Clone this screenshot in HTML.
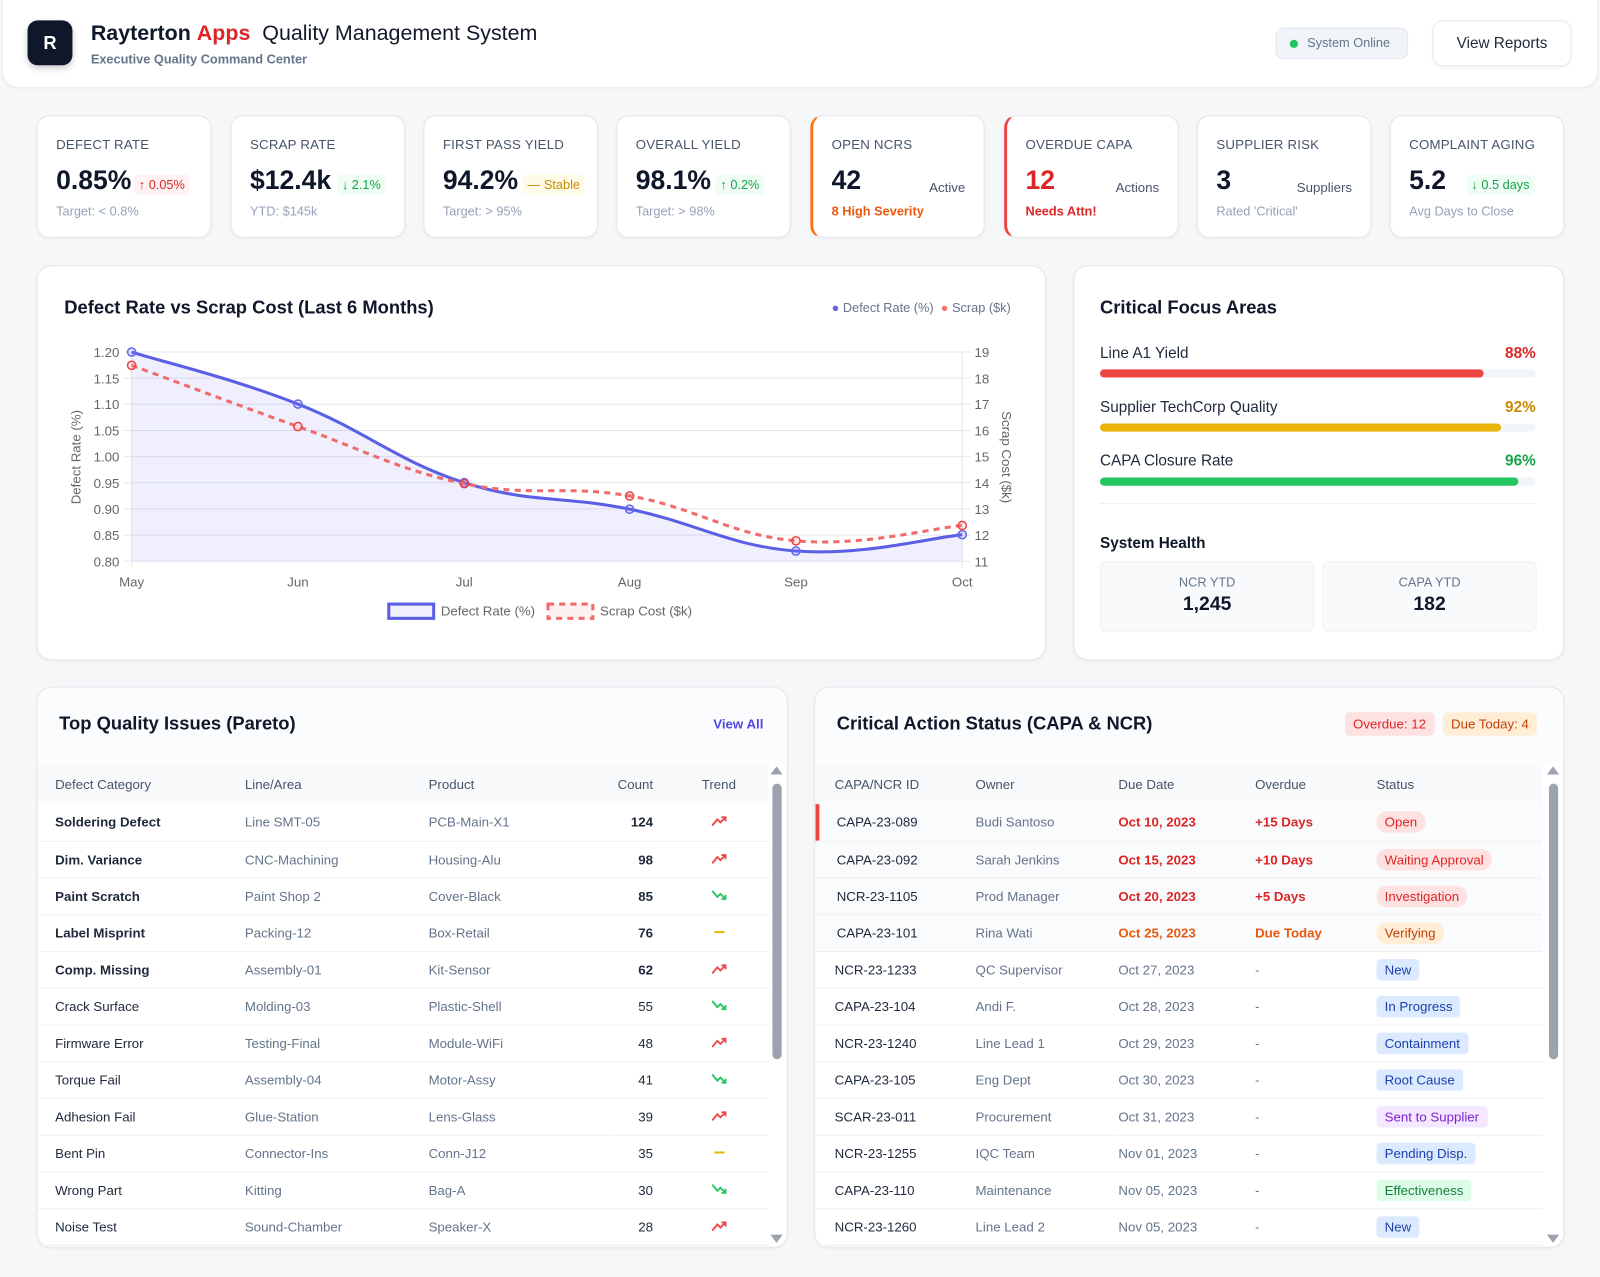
<!DOCTYPE html>
<html><head><meta charset="utf-8">
<style>
*{box-sizing:border-box;margin:0;padding:0}
html,body{width:1600px;height:1276px;overflow:hidden;background:#f6f7f9}
body{font-family:"Liberation Sans",sans-serif;color:#0f172a}
#w{position:absolute;left:0;top:0;width:1568px;height:1251px;transform:scale(1.0204);transform-origin:0 0}
.abs{position:absolute}
.card{position:absolute;background:#fff;border:1px solid #e5e7eb;border-radius:14px;box-shadow:0 1px 3px rgba(0,0,0,.05)}
.kpi{position:absolute;top:113px;width:171px;height:120px;background:#fff;border:1px solid #e5e7eb;border-radius:12px;box-shadow:0 1px 3px rgba(0,0,0,.05)}
.kpi .l{position:absolute;left:18px;top:20px;font-size:13px;color:#475569;letter-spacing:.2px}
.kpi .v{position:absolute;left:18px;top:47px;font-size:26px;font-weight:bold;color:#0f172a}
.kpi .s{position:absolute;left:18px;top:86px;font-size:12.5px;color:#94a3b8}
.kpi .b{position:absolute;top:57px;font-size:12.5px;padding:3px 5px;border-radius:5px}
.kpi .r{position:absolute;right:18px;top:62px;font-size:13px;color:#475569}
.red{color:#dc2626}.grn{color:#16a34a}
table{border-collapse:collapse;table-layout:fixed;position:absolute;font-size:13px}
th{height:40px;background:#f8fafc;color:#475569;font-weight:normal;text-align:left;font-size:13px}
td{height:36px;border-bottom:1px solid #eef0f3;color:#64748b}
.pill{display:inline-block;padding:3px 8px;border-radius:10px;font-size:13px}
.sq{border-radius:4px}
h2{position:absolute;font-size:18px;font-weight:bold;color:#0f172a}
</style></head><body><div id="w">

<div class="abs" style="left:2px;top:0;width:1564px;height:86px;background:#fff;border:1px solid #eceef1;border-top:none;border-radius:0 0 16px 16px;box-shadow:0 1px 4px rgba(0,0,0,.04)"></div>
<div class="abs" style="left:27px;top:20px;width:44px;height:44px;background:#0f172a;border-radius:10px;color:#fff;font-weight:bold;font-size:18px;text-align:center;line-height:44px;box-shadow:0 3px 6px rgba(0,0,0,.2)">R</div>
<div class="abs" style="left:89px;top:21px;font-size:21px;white-space:nowrap"><b>Rayterton</b> <b style="color:#dc2626">Apps</b>&nbsp;&nbsp;<span style="color:#111827">Quality Management System</span></div>
<div class="abs" style="left:89px;top:51px;font-size:12.5px;color:#64748b;font-weight:bold">Executive Quality Command Center</div>
<div class="abs" style="left:1250px;top:27px;width:130px;height:31px;background:#f1f5f9;border:1px solid #e2e8f0;border-radius:8px;font-size:12.5px;color:#64748b;line-height:29px;padding-left:30px"><span class="abs" style="left:13px;top:11px;width:8px;height:8px;border-radius:50%;background:#22c55e"></span>System Online</div>
<div class="abs" style="left:1404px;top:20px;width:136px;height:45px;background:#fff;border:1px solid #e2e8f0;border-radius:10px;font-size:15px;color:#1e293b;text-align:center;line-height:43px;box-shadow:0 1px 3px rgba(0,0,0,.05)">View Reports</div>

<div class="kpi" style="left:36px"><div class="l">DEFECT RATE</div><div class="v">0.85%</div><div class="b" style="left:94px;background:#fef2f2;color:#dc2626">↑ 0.05%</div><div class="s">Target: &lt; 0.8%</div></div>
<div class="kpi" style="left:226px"><div class="l">SCRAP RATE</div><div class="v">$12.4k</div><div class="b" style="left:103px;background:#f0fdf4;color:#16a34a">↓ 2.1%</div><div class="s">YTD: $145k</div></div>
<div class="kpi" style="left:415px"><div class="l">FIRST PASS YIELD</div><div class="v">94.2%</div><div class="b" style="left:96px;background:#fefce8;color:#ca8a04">— Stable</div><div class="s">Target: &gt; 95%</div></div>
<div class="kpi" style="left:604px"><div class="l">OVERALL YIELD</div><div class="v">98.1%</div><div class="b" style="left:96px;background:#f0fdf4;color:#16a34a">↑ 0.2%</div><div class="s">Target: &gt; 98%</div></div>
<div class="kpi" style="left:794px;border-left:3px solid #f97316"><div class="l">OPEN NCRS</div><div class="v">42</div><div class="r">Active</div><div class="s" style="color:#ea580c;font-weight:bold">8 High Severity</div></div>
<div class="kpi" style="left:984px;border-left:3px solid #ef4444"><div class="l">OVERDUE CAPA</div><div class="v" style="color:#dc2626">12</div><div class="r">Actions</div><div class="s" style="color:#dc2626;font-weight:bold">Needs Attn!</div></div>
<div class="kpi" style="left:1173px"><div class="l">SUPPLIER RISK</div><div class="v">3</div><div class="r">Suppliers</div><div class="s">Rated 'Critical'</div></div>
<div class="kpi" style="left:1362px"><div class="l">COMPLAINT AGING</div><div class="v">5.2</div><div class="b" style="left:74px;background:#f0fdf4;color:#16a34a">↓ 0.5 days</div><div class="s">Avg Days to Close</div></div>

<div class="card" style="left:36px;top:260px;width:989px;height:387px"></div>
<h2 style="left:63px;top:291px">Defect Rate vs Scrap Cost (Last 6 Months)</h2>
<div class="abs" style="left:815px;top:295px;font-size:12.5px;color:#64748b;white-space:nowrap"><span style="color:#6366f1">●</span> Defect Rate (%) &nbsp;<span style="color:#f87171">●</span> Scrap ($k)</div>
<svg class="abs" style="left:0;top:0" width="1030" height="650" font-family="Liberation Sans,sans-serif" font-size="13" fill="#666">
<g stroke="#e5e7eb" stroke-width="1">
<line x1="121" y1="345" x2="951" y2="345"/><line x1="121" y1="370.6" x2="951" y2="370.6"/><line x1="121" y1="396.2" x2="951" y2="396.2"/><line x1="121" y1="421.9" x2="951" y2="421.9"/><line x1="121" y1="447.5" x2="951" y2="447.5"/><line x1="121" y1="473.1" x2="951" y2="473.1"/><line x1="121" y1="498.7" x2="951" y2="498.7"/><line x1="121" y1="524.4" x2="951" y2="524.4"/><line x1="121" y1="550" x2="951" y2="550"/>
<line x1="129" y1="345" x2="129" y2="556"/><line x1="943" y1="345" x2="943" y2="556"/>
</g>
<g text-anchor="end"><text x="117" y="350">1.20</text><text x="117" y="375.6">1.15</text><text x="117" y="401">1.10</text><text x="117" y="427">1.05</text><text x="117" y="452.5">1.00</text><text x="117" y="478">0.95</text><text x="117" y="503.7">0.90</text><text x="117" y="529.4">0.85</text><text x="117" y="555">0.80</text></g>
<g><text x="955" y="350">19</text><text x="955" y="375.6">18</text><text x="955" y="401">17</text><text x="955" y="427">16</text><text x="955" y="452.5">15</text><text x="955" y="478">14</text><text x="955" y="503.7">13</text><text x="955" y="529.4">12</text><text x="955" y="555">11</text></g>
<g text-anchor="middle"><text x="129" y="575">May</text><text x="292" y="575">Jun</text><text x="455" y="575">Jul</text><text x="617" y="575">Aug</text><text x="780" y="575">Sep</text><text x="943" y="575">Oct</text></g>
<text transform="translate(79,448) rotate(-90)" text-anchor="middle">Defect Rate (%)</text>
<text transform="translate(982,448) rotate(90)" text-anchor="middle">Scrap Cost ($k)</text>
<path d="M129,345 C161.6,355.2 226.8,370.4 292,396 C357.2,421.6 390,452.4 455,473 C520,493.6 552,485.6 617,499 C682,512.4 714.8,535 780,540 C845.2,545 910.4,527.2 943,524 L943,550 L129,550 Z" fill="rgba(99,102,241,0.1)"/>
<path d="M129,345 C161.6,355.2 226.8,370.4 292,396 C357.2,421.6 390,452.4 455,473 C520,493.6 552,485.6 617,499 C682,512.4 714.8,535 780,540 C845.2,545 910.4,527.2 943,524" fill="none" stroke="#5b5fe6" stroke-width="3"/>
<path d="M129,358 C161.6,370 226.8,394.8 292,418 C357.2,441.2 390,460.4 455,474 C520,487.6 552,474.8 617,486 C682,497.2 714.8,524.2 780,530 C845.2,535.8 910.4,518 943,515" fill="none" stroke="#f06b6b" stroke-width="3" stroke-dasharray="6,5"/>
<g fill="rgba(99,102,241,0.15)" stroke="#6366f1" stroke-width="1.5"><circle cx="129" cy="345" r="4"/><circle cx="292" cy="396" r="4"/><circle cx="455" cy="473" r="4"/><circle cx="617" cy="499" r="4"/><circle cx="780" cy="540" r="4"/><circle cx="943" cy="524" r="4"/></g>
<g fill="rgba(248,113,113,0.15)" stroke="#ef4444" stroke-width="1.5"><circle cx="129" cy="358" r="4"/><circle cx="292" cy="418" r="4"/><circle cx="455" cy="474" r="4"/><circle cx="617" cy="486" r="4"/><circle cx="780" cy="530" r="4"/><circle cx="943" cy="515" r="4"/></g>
<rect x="381" y="592" width="44" height="14" fill="rgba(99,102,241,0.1)" stroke="#5b5fe6" stroke-width="3"/>
<text x="432" y="603">Defect Rate (%)</text>
<rect x="537" y="592" width="44" height="14" fill="rgba(248,113,113,0.1)" stroke="#f06b6b" stroke-width="3" stroke-dasharray="6,5"/>
<text x="588" y="603">Scrap Cost ($k)</text>
</svg>

<div class="card" style="left:1052px;top:260px;width:481px;height:387px"></div>
<h2 style="left:1078px;top:291px">Critical Focus Areas</h2>
<div class="abs" style="left:1078px;top:338px;width:427px;font-size:15px;color:#1e293b">Line A1 Yield<b class="abs red" style="right:0;top:0">88%</b></div>
<div class="abs" style="left:1078px;top:362px;width:427px;height:8px;background:#f1f5f9;border-radius:4px"><div style="width:88%;height:8px;background:#ef4444;border-radius:4px"></div></div>
<div class="abs" style="left:1078px;top:391px;width:427px;font-size:15px;color:#1e293b">Supplier TechCorp Quality<b class="abs" style="right:0;top:0;color:#ca8a04">92%</b></div>
<div class="abs" style="left:1078px;top:415px;width:427px;height:8px;background:#f1f5f9;border-radius:4px"><div style="width:92%;height:8px;background:#eab308;border-radius:4px"></div></div>
<div class="abs" style="left:1078px;top:443px;width:427px;font-size:15px;color:#1e293b">CAPA Closure Rate<b class="abs grn" style="right:0;top:0">96%</b></div>
<div class="abs" style="left:1078px;top:468px;width:427px;height:8px;background:#f1f5f9;border-radius:4px"><div style="width:96%;height:8px;background:#22c55e;border-radius:4px"></div></div>
<div class="abs" style="left:1078px;top:493px;width:427px;height:1px;background:#eef0f3"></div>
<div class="abs" style="left:1078px;top:524px;font-size:15px;font-weight:bold">System Health</div>
<div class="abs" style="left:1078px;top:550px;width:210px;height:69px;background:#f8fafc;border:1px solid #eef0f3;border-radius:6px;text-align:center"><div style="font-size:12.5px;color:#64748b;margin-top:13px">NCR YTD</div><div style="font-size:19px;font-weight:bold;margin-top:4px">1,245</div></div>
<div class="abs" style="left:1296px;top:550px;width:210px;height:69px;background:#f8fafc;border:1px solid #eef0f3;border-radius:6px;text-align:center"><div style="font-size:12.5px;color:#64748b;margin-top:13px">CAPA YTD</div><div style="font-size:19px;font-weight:bold;margin-top:4px">182</div></div>

<div class="card" style="left:36px;top:673px;width:736px;height:550px;overflow:hidden;background:#fff"></div>
<div class="abs" style="left:37px;top:674px;width:734px;height:74px;background:#fbfcfd;border-radius:14px 14px 0 0"></div>
<h2 style="left:58px;top:699px">Top Quality Issues (Pareto)</h2>
<div class="abs" style="left:699px;top:702px;font-size:13px;color:#4f46e5;font-weight:bold">View All</div>
<table style="left:37px;top:748px;width:716px">
<colgroup><col style="width:203px"><col style="width:180px"><col style="width:180px"><col style="width:40px"><col style="width:113px"></colgroup>
<tr><th style="padding-left:17px">Defect Category</th><th>Line/Area</th><th>Product</th><th style="text-align:right">Count</th><th style="text-align:center;padding-left:16px">Trend</th></tr>
<tbody id="pb"></tbody>
</table>
<div class="abs" style="left:757px;top:768px;width:9px;height:270px;background:#9ca3af;border-radius:5px"></div>
<div class="abs" style="left:755px;top:751px;width:0;height:0;border-left:6px solid transparent;border-right:6px solid transparent;border-bottom:8px solid #9ca3af"></div>
<div class="abs" style="left:755px;top:1210px;width:0;height:0;border-left:6px solid transparent;border-right:6px solid transparent;border-top:8px solid #9ca3af"></div>

<div class="card" style="left:798px;top:673px;width:735px;height:550px"></div>
<div class="abs" style="left:799px;top:674px;width:733px;height:74px;background:#fbfcfd;border-radius:14px 14px 0 0"></div>
<h2 style="left:820px;top:699px">Critical Action Status (CAPA &amp; NCR)</h2>
<div class="abs" style="left:1318px;top:698px;font-size:13px;background:#fee2e2;color:#dc2626;padding:4px 8px;border-radius:5px">Overdue: 12</div>
<div class="abs" style="left:1414px;top:698px;font-size:13px;background:#ffedd5;color:#c2410c;padding:4px 8px;border-radius:5px">Due Today: 4</div>
<table style="left:799px;top:748px;width:713px">
<colgroup><col style="width:157px"><col style="width:140px"><col style="width:134px"><col style="width:119px"><col style="width:163px"></colgroup>
<tr><th style="padding-left:19px">CAPA/NCR ID</th><th>Owner</th><th>Due Date</th><th>Overdue</th><th>Status</th></tr>
<tbody id="cb"></tbody>
</table>
<div class="abs" style="left:1518px;top:768px;width:9px;height:270px;background:#9ca3af;border-radius:5px"></div>
<div class="abs" style="left:1516px;top:751px;width:0;height:0;border-left:6px solid transparent;border-right:6px solid transparent;border-bottom:8px solid #9ca3af"></div>
<div class="abs" style="left:1516px;top:1210px;width:0;height:0;border-left:6px solid transparent;border-right:6px solid transparent;border-top:8px solid #9ca3af"></div>
</div>
<script>
var up='<svg width="16" height="11" viewBox="0 0 16 11"><path d="M1,10 L6,4 L9,7 L14,2 M10,2 L14,2 L14,6" fill="none" stroke="#ef4444" stroke-width="1.8"/></svg>';
var dn='<svg width="16" height="11" viewBox="0 0 16 11"><path d="M1,1 L6,7 L9,4 L14,9 M10,9 L14,9 L14,5" fill="none" stroke="#22c55e" stroke-width="1.8"/></svg>';
var fl='<svg width="16" height="11" viewBox="0 0 16 11"><path d="M3,5.5 L13,5.5" stroke="#eab308" stroke-width="2"/></svg>';
var P=[["Soldering Defect","Line SMT-05","PCB-Main-X1","124",up],["Dim. Variance","CNC-Machining","Housing-Alu","98",up],["Paint Scratch","Paint Shop 2","Cover-Black","85",dn],["Label Misprint","Packing-12","Box-Retail","76",fl],["Comp. Missing","Assembly-01","Kit-Sensor","62",up],["Crack Surface","Molding-03","Plastic-Shell","55",dn],["Firmware Error","Testing-Final","Module-WiFi","48",up],["Torque Fail","Assembly-04","Motor-Assy","41",dn],["Adhesion Fail","Glue-Station","Lens-Glass","39",up],["Bent Pin","Connector-Ins","Conn-J12","35",fl],["Wrong Part","Kitting","Bag-A","30",dn],["Noise Test","Sound-Chamber","Speaker-X","28",up]];
var h='';P.forEach(function(r,i){var b=i<5;h+='<tr><td style="padding-left:17px;color:#1e293b;'+(b?'font-weight:bold':'')+'">'+r[0]+'</td><td>'+r[1]+'</td><td>'+r[2]+'</td><td style="text-align:right;color:#1e293b;'+(b?'font-weight:bold':'')+'">'+r[3]+'</td><td style="text-align:center;padding-left:16px">'+r[4]+'</td></tr>';});
document.getElementById('pb').innerHTML=h;
var C=[["CAPA-23-089","Budi Santoso","Oct 10, 2023","+15 Days","Open","#fee2e2","#dc2626",1],["CAPA-23-092","Sarah Jenkins","Oct 15, 2023","+10 Days","Waiting Approval","#fee2e2","#dc2626",1],["NCR-23-1105","Prod Manager","Oct 20, 2023","+5 Days","Investigation","#fee2e2","#dc2626",1],["CAPA-23-101","Rina Wati","Oct 25, 2023","Due Today","Verifying","#ffedd5","#c2410c",2],["NCR-23-1233","QC Supervisor","Oct 27, 2023","-","New","#dbeafe","#1e40af",0],["CAPA-23-104","Andi F.","Oct 28, 2023","-","In Progress","#dbeafe","#1e40af",0],["NCR-23-1240","Line Lead 1","Oct 29, 2023","-","Containment","#dbeafe","#1e40af",0],["CAPA-23-105","Eng Dept","Oct 30, 2023","-","Root Cause","#dbeafe","#1e40af",0],["SCAR-23-011","Procurement","Oct 31, 2023","-","Sent to Supplier","#f3e8ff","#7e22ce",0],["NCR-23-1255","IQC Team","Nov 01, 2023","-","Pending Disp.","#dbeafe","#1e40af",0],["CAPA-23-110","Maintenance","Nov 05, 2023","-","Effectiveness","#dcfce7","#15803d",0],["NCR-23-1260","Line Lead 2","Nov 05, 2023","-","New","#dbeafe","#1e40af",0]];
h='';C.forEach(function(r,i){var k=r[7];var col=k==1?'#dc2626':(k==2?'#ea580c':'');var bg=k?'background:#fafbfc;':'';
h+='<tr style="'+bg+'"><td style="padding-left:'+(i<4?21:19)+'px;color:#1e293b;'+(i==0?'box-shadow:inset 4px 0 0 #ef4444;':'')+'">'+r[0]+'</td><td>'+r[1]+'</td><td style="'+(k?'font-weight:bold;color:'+col:'')+'">'+r[2]+'</td><td style="'+(k?'font-weight:bold;color:'+col:'')+'">'+r[3]+'</td><td><span class="pill'+(k?'':' sq')+'" style="background:'+r[5]+';color:'+r[6]+'">'+r[4]+'</span></td></tr>';});
document.getElementById('cb').innerHTML=h;
</script>
</body></html>
